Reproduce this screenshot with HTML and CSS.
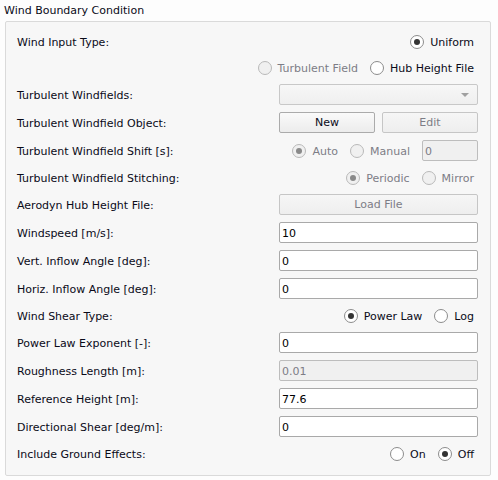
FILE: index.html
```html
<!DOCTYPE html>
<html>
<head>
<meta charset="utf-8">
<link rel="stylesheet" href="styles.css">
</head>
<body>
<div class="title">Wind Boundary Condition</div>
<div class="group">
  <div class="row rb">
    <div class="lbl">Wind Input Type:</div>
    <div class="ctl"><span class="radio"><span class="dot on"></span>Uniform</span></div>
  </div>
  <div class="row rb">
    <div class="lbl"></div>
    <div class="ctl">
      <span class="radio dis"><span class="dot"></span>Turbulent Field</span>
      <span class="radio"><span class="dot"></span>Hub Height File</span>
    </div>
  </div>
  <div class="row">
    <div class="lbl">Turbulent Windfields:</div>
    <div class="ctl"><div class="combo"><span class="arrow"></span></div></div>
  </div>
  <div class="row">
    <div class="lbl">Turbulent Windfield Object:</div>
    <div class="ctl btns"><div class="btn">New</div><div class="btn dis">Edit</div></div>
  </div>
  <div class="row">
    <div class="lbl">Turbulent Windfield Shift [s]:</div>
    <div class="ctl">
      <span class="radio dis"><span class="dot on"></span>Auto</span>
      <span class="radio dis"><span class="dot"></span>Manual</span>
      <div class="input dis small">0</div>
    </div>
  </div>
  <div class="row rb">
    <div class="lbl">Turbulent Windfield Stitching:</div>
    <div class="ctl">
      <span class="radio dis"><span class="dot on"></span>Periodic</span>
      <span class="radio dis"><span class="dot"></span>Mirror</span>
    </div>
  </div>
  <div class="row">
    <div class="lbl">Aerodyn Hub Height File:</div>
    <div class="ctl"><div class="btn dis wide">Load File</div></div>
  </div>
  <div class="row">
    <div class="lbl">Windspeed [m/s]:</div>
    <div class="ctl"><div class="input">10</div></div>
  </div>
  <div class="row">
    <div class="lbl">Vert. Inflow Angle [deg]:</div>
    <div class="ctl"><div class="input">0</div></div>
  </div>
  <div class="row">
    <div class="lbl">Horiz. Inflow Angle [deg]:</div>
    <div class="ctl"><div class="input">0</div></div>
  </div>
  <div class="row rb">
    <div class="lbl">Wind Shear Type:</div>
    <div class="ctl">
      <span class="radio"><span class="dot on"></span>Power Law</span>
      <span class="radio"><span class="dot"></span>Log</span>
    </div>
  </div>
  <div class="row">
    <div class="lbl">Power Law Exponent [-]:</div>
    <div class="ctl"><div class="input">0</div></div>
  </div>
  <div class="row">
    <div class="lbl">Roughness Length [m]:</div>
    <div class="ctl"><div class="input dis">0.01</div></div>
  </div>
  <div class="row">
    <div class="lbl">Reference Height [m]:</div>
    <div class="ctl"><div class="input">77.6</div></div>
  </div>
  <div class="row">
    <div class="lbl">Directional Shear [deg/m]:</div>
    <div class="ctl"><div class="input">0</div></div>
  </div>
  <div class="row rb">
    <div class="lbl">Include Ground Effects:</div>
    <div class="ctl">
      <span class="radio"><span class="dot"></span>On</span>
      <span class="radio"><span class="dot on"></span>Off</span>
    </div>
  </div>
</div>
</body>
</html>
```
FILE: styles.css
```css
html, body {
  margin: 0;
  padding: 0;
  background: #fdfdfd;
  font-family: "DejaVu Sans", Verdana, sans-serif;
  font-size: 11px;
  color: #0a0a18;
}
.title {
  height: 21px;
  line-height: 22px;
  padding-left: 4px;
}
.group {
  margin-left: 5px;
  width: 462px;
  padding: 10px 11px 12px 11px;
  border: 1px solid #dadada;
  border-radius: 2px;
  background: #f7f7f7;
  display: flex;
  flex-direction: column;
  gap: 7px;
}
.row {
  display: flex;
  align-items: center;
  height: 21px;
}
.row.rb { height: 19px; }
.lbl {
  width: 262px;
  flex: none;
  padding-top: 2px;
}
.ctl {
  width: 199px;
  flex: none;
  display: flex;
  justify-content: flex-end;
  align-items: center;
  gap: 8px;
  height: 100%;
}
.radio {
  display: flex;
  align-items: center;
  padding-right: 4px;
  white-space: nowrap;
  padding-top: 1px;
}
.radio .dot { margin-top: -1px; }
.radio.dis { color: #7d7d86; }
.dot {
  width: 12px;
  height: 12px;
  border: 1px solid #8c8c8c;
  border-radius: 50%;
  background: #fff;
  margin-right: 6px;
  display: flex;
  align-items: center;
  justify-content: center;
}
.radio.dis .dot {
  border-color: #b9b9b9;
  background: #f0f0f0;
}
.dot.on::after {
  content: "";
  width: 6px;
  height: 6px;
  border-radius: 50%;
  background: #333;
}
.radio.dis .dot.on::after { background: #8a8a8a; }
.combo {
  width: 197px;
  height: 19px;
  border: 1px solid #c8c8c8;
  border-radius: 2px;
  background: linear-gradient(#f7f7f7, #efefef);
  position: relative;
}
.arrow {
  position: absolute;
  right: 8px;
  top: 8px;
  width: 0;
  height: 0;
  border-left: 4px solid transparent;
  border-right: 4px solid transparent;
  border-top: 4px solid #a0a0a0;
}
.btns { gap: 7px; }
.btn {
  flex: 1;
  height: 19px;
  line-height: 20px;
  text-align: center;
  border: 1px solid #ababab;
  border-radius: 2px;
  background: linear-gradient(#fafafa, #ececec);
  color: #0a0a18;
}
.btn.dis {
  border-color: #c6c6c6;
  background: linear-gradient(#f6f6f6, #eeeeee);
  color: #7d7d86;
}
.input {
  width: 195px;
  height: 19px;
  line-height: 21px;
  padding-left: 2px;
  border: 1px solid #a9a9a9;
  border-radius: 2px;
  background: #fff;
  color: #000;
}
.input.dis {
  border-color: #bdbdbd;
  background: #f0f0f0;
  color: #7d7d86;
}
.input.small {
  width: 52px;
  flex: none;
}
```
